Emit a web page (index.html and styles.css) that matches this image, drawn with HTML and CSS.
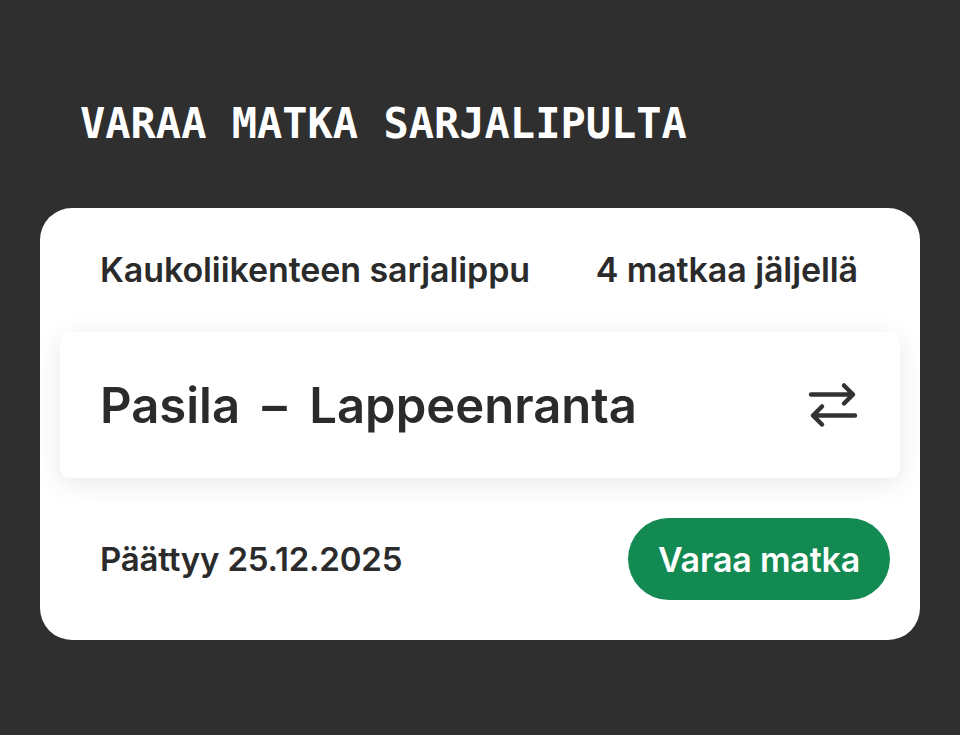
FILE: index.html
```html
<!DOCTYPE html>
<html lang="fi">
<head>
    <meta charset="UTF-8">
    <meta name="viewport" content="width=device-width, initial-scale=1.0">
    <title>Varaa matka sarjalipulta</title>
    <link rel="stylesheet" href="styles.css">
</head>
<body>
    <div class="page">
        <h1 class="page-title">VARAA MATKA SARJALIPULTA</h1>

        <div class="ticket-card">
            <div class="ticket-header">
                <span class="ticket-name">Kaukoliikenteen sarjalippu</span>
                <span class="ticket-left">4 matkaa jäljellä</span>
            </div>

            <div class="route-box">
                <span class="route-text">Pasila <span class="route-dash">–</span> Lappeenranta</span>
                <button class="swap-btn" aria-label="Vaihda suunta">
                    <svg width="50" height="48" viewBox="0 0 50 48" fill="none" stroke="#333" stroke-width="4.5" stroke-linecap="round" stroke-linejoin="round">
                        <path d="M3 13.5h42M36 4.5l9 9-9 9"/>
                        <path d="M47 34.5H5M14 25.5l-9 9 9 9"/>
                    </svg>
                </button>
            </div>

            <div class="ticket-footer">
                <span class="ticket-expires">Päättyy 25.12.2025</span>
                <button class="book-btn">Varaa matka</button>
            </div>
        </div>
    </div>
</body>
</html>
```

FILE: styles.css
```css
* {
    margin: 0;
    padding: 0;
    box-sizing: border-box;
}

body {
    font-family: Inter, "Noto Sans", Arial, sans-serif;
    background: #2f2f2f;
    color: #2b2b2b;
    height: 100vh;
    overflow: hidden;
}

.page {
    padding: 99px 40px 0;
}

.page-title {
    font-family: "DejaVu Sans Mono", "Liberation Mono", monospace;
    font-weight: bold;
    font-size: 42px;
    line-height: 50px;
    color: #fff;
    padding-left: 40px;
    margin-bottom: 59px;
}

.ticket-card {
    background: #fff;
    border-radius: 32px;
    padding: 36px 20px 40px;
}

.ticket-header {
    display: flex;
    justify-content: space-between;
    align-items: center;
    padding: 0 42px 0 40px;
    font-size: 34px;
    font-weight: 600;
    letter-spacing: -0.1px;
    height: 50px;
}

.route-box {
    display: flex;
    justify-content: space-between;
    align-items: center;
    height: 146px;
    margin-top: 38px;
    padding: 0 42px 0 40px;
    border-radius: 10px;
    background: #fff;
    box-shadow: 0 6px 28px rgba(0, 0, 0, 0.09);
}

.route-text {
    font-size: 49px;
    font-weight: 600;
}

.route-dash {
    margin: 0 10px;
}

.swap-btn {
    background: none;
    border: none;
    display: flex;
    align-items: center;
    justify-content: center;
}

.ticket-footer {
    display: flex;
    justify-content: space-between;
    align-items: center;
    margin-top: 40px;
    padding: 0 10px 0 40px;
}

.ticket-expires {
    font-size: 33px;
    font-weight: 600;
    letter-spacing: -0.2px;
}

.book-btn {
    font-family: inherit;
    font-size: 34px;
    font-weight: 600;
    letter-spacing: -0.2px;
    color: #fff;
    background: #138a52;
    border: none;
    border-radius: 41px;
    height: 82px;
    width: 262px;
}
```
